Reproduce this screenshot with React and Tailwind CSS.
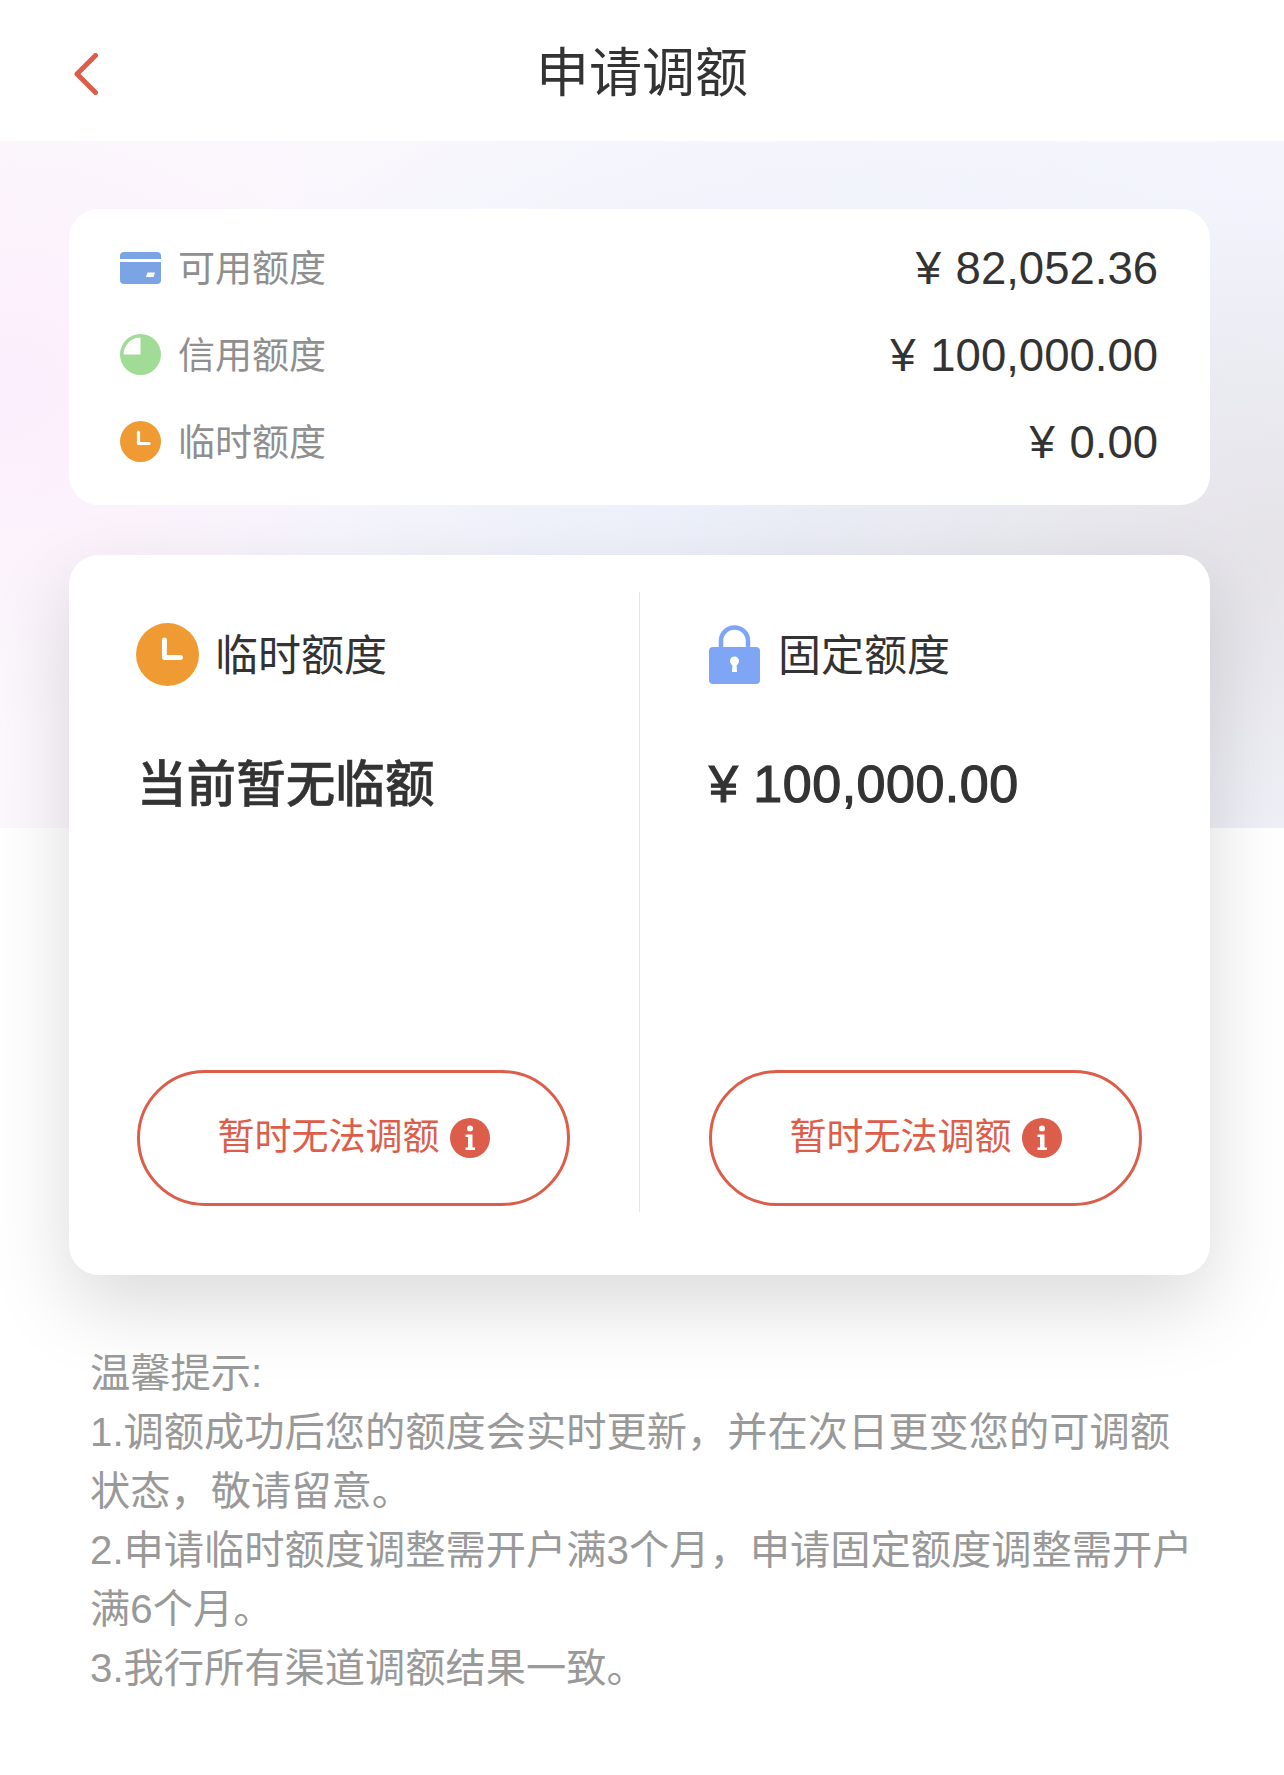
const fontStack = "font-['Liberation_Sans','Noto_Sans_CJK_SC',sans-serif]";

function CardIcon() {
  return (
    <svg width="41" height="32" viewBox="0 0 41 32" className="shrink-0">
      <rect width="41" height="32" rx="4" fill="#7ba4e4" />
      <rect y="7" width="41" height="3" fill="#ffffff" />
      <path d="M26 25 L33.5 25 L35 20.5 L27.5 20.5 Z" fill="#ffffff" />
    </svg>
  );
}

function PieIcon() {
  return (
    <svg width="41" height="41" viewBox="0 0 41 41" className="shrink-0">
      <circle cx="20.5" cy="20.5" r="20.5" fill="#a0dc96" />
      <path d="M20.5 20.5 H3.5 A17 17 0 0 1 20.5 3.5 Z" fill="#ffffff" />
    </svg>
  );
}

function ClockIcon({ size }) {
  return (
    <svg width={size} height={size} viewBox="0 0 41 41" className="shrink-0">
      <circle cx="20.5" cy="20.5" r="20.5" fill="#f09a33" />
      <path d="M18.5 11 V22.5 H29" fill="none" stroke="#ffffff" strokeWidth="3.2" strokeLinecap="round" strokeLinejoin="round" />
    </svg>
  );
}

function LockIcon() {
  return (
    <svg width="51" height="59" viewBox="0 0 51 59" className="shrink-0">
      <path d="M12 24 V16 A13.5 13.5 0 0 1 39 16 V24" fill="none" stroke="#7ea6f5" strokeWidth="4.5" />
      <rect y="22" width="51" height="37" rx="4" fill="#7ea6f5" />
      <circle cx="25.5" cy="36" r="4.5" fill="#ffffff" />
      <path d="M23.5 38 H27.5 L28 47 H23 Z" fill="#ffffff" />
    </svg>
  );
}

function InfoIcon() {
  return (
    <svg width="40" height="40" viewBox="0 0 40 40" className="shrink-0">
      <circle cx="20" cy="20" r="20" fill="#dd5d4b" />
      <circle cx="20" cy="10.5" r="3" fill="#ffffff" />
      <path d="M15.5 16.5 H22.5 V29.5 H25 V32 H15.5 V29.5 H18 V19 H15.5 Z" fill="#ffffff" />
    </svg>
  );
}

function LimitRow({ icon, label, value }) {
  return (
    <div className="flex h-[87px] items-center justify-between">
      <div className="flex items-center">
        <span className="flex w-[41px] justify-center">{icon}</span>
        <span className="ml-[17px] pt-[4px] text-[37px] text-[#8f8f8f]">{label}</span>
      </div>
      <span className="pt-[3px] text-[45.5px] [word-spacing:2px] text-[#333333]">{value}</span>
    </div>
  );
}

function AdjustButton() {
  return (
    <button className="mt-auto mb-[6px] flex h-[136px] w-[433px] items-center justify-center gap-[10px] rounded-full border-[3px] border-[#dd5d4b] text-[37px] text-[#dd5d4b]">
      暂时无法调额
      <InfoIcon />
    </button>
  );
}

export default function App() {
  return (
    <div className={`min-h-[1775px] bg-white ${fontStack}`}>
      <header className="grid h-[141px] grid-cols-[1fr_auto_1fr] items-center bg-white pt-[7px]">
        <svg width="24" height="42" viewBox="0 0 24 42" className="ml-[74px]">
          <path d="M21.5 2.5 L3 21 L21.5 39.5" fill="none" stroke="#dd5d4b" strokeWidth="5" strokeLinecap="round" strokeLinejoin="round" />
        </svg>
        <h1 className="text-[53px] font-normal text-[#333333]">申请调额</h1>
      </header>

      <main className="bg-[radial-gradient(ellipse_420px_340px_at_0%_36%,#fbeefc_0%,transparent_100%),radial-gradient(ellipse_620px_360px_at_100%_60%,#e5e3e8_0%,transparent_100%),radial-gradient(ellipse_620px_380px_at_60%_42%,#e9eef9_0%,transparent_100%),linear-gradient(100deg,#fdf8fd_0%,#f8f7fd_50%,#f2f4fc_100%)] bg-[length:100%_687px] bg-no-repeat pt-[68px] pr-[74px] pl-[69px]">
        <section className="h-[296px] rounded-[30px] bg-white pt-[15px] pr-[52px] pl-[51px]">
          <LimitRow icon={<CardIcon />} label="可用额度" value="¥ 82,052.36" />
          <LimitRow icon={<PieIcon />} label="信用额度" value="¥ 100,000.00" />
          <LimitRow icon={<ClockIcon size={41} />} label="临时额度" value="¥ 0.00" />
        </section>

        <section className="mt-[50px] flex h-[720px] rounded-[30px] bg-white pt-[37px] pb-[63px] shadow-[0_30px_80px_rgba(0,0,0,0.15)]">
          <div className="flex flex-1 flex-col pr-[2px] pl-[67px]">
            <div className="mt-[31px] flex h-[63px] items-center">
              <ClockIcon size={63} />
              <span className="ml-[16px] pt-[3px] text-[43px] text-[#333333]">临时额度</span>
            </div>
            <p className="mt-[67px] ml-[1px] text-[49.6px] leading-[64px] font-medium text-[#333333] [-webkit-text-stroke:0.5px_#333333]">当前暂无临额</p>
            <div className="mt-auto ml-[1px] flex">
              <AdjustButton />
            </div>
          </div>
          <div className="w-px bg-[#e4e4e4]" />
          <div className="flex flex-1 flex-col pl-[69px]">
            <div className="mt-[31px] flex h-[63px] items-center">
              <LockIcon />
              <span className="ml-[18px] pt-[3px] text-[43px] text-[#333333]">固定额度</span>
            </div>
            <p className="mt-[66px] text-[52px] leading-[64px] tracking-[0.5px] text-[#333333] [-webkit-text-stroke:1.2px_#333333]">¥ 100,000.00</p>
            <AdjustButton />
          </div>
        </section>

        <div className="mt-[69px] ml-[21px] w-[1108px] text-[40.25px] leading-[59px] text-[#999999]">
          <p>温馨提示:</p>
          <p>1.调额成功后您的额度会实时更新，并在次日更变您的可调额状态，敬请留意。</p>
          <p>2.申请临时额度调整需开户满3个月，申请固定额度调整需开户满6个月。</p>
          <p>3.我行所有渠道调额结果一致。</p>
        </div>
      </main>
    </div>
  );
}
